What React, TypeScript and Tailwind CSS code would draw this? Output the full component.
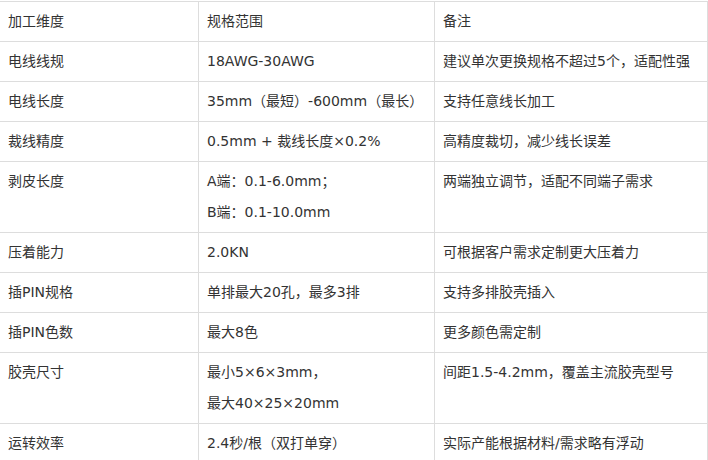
const rows: [string, string[], string][] = [
  ["加工维度", ["规格范围"], "备注"],
  ["电线线规", ["18AWG-30AWG"], "建议单次更换规格不超过5个，适配性强"],
  ["电线长度", ["35mm（最短）-600mm（最长）"], "支持任意线长加工"],
  ["裁线精度", ["0.5mm + 裁线长度×0.2%"], "高精度裁切，减少线长误差"],
  ["剥皮长度", ["A端：0.1-6.0mm；", "B端：0.1-10.0mm"], "两端独立调节，适配不同端子需求"],
  ["压着能力", ["2.0KN"], "可根据客户需求定制更大压着力"],
  ["插PIN规格", ["单排最大20孔，最多3排"], "支持多排胶壳插入"],
  ["插PIN色数", ["最大8色"], "更多颜色需定制"],
  ["胶壳尺寸", ["最小5×6×3mm，", "最大40×25×20mm"], "间距1.5-4.2mm，覆盖主流胶壳型号"],
  ["运转效率", ["2.4秒/根（双打单穿）"], "实际产能根据材料/需求略有浮动"],
];

export default function App() {
  return (
    <div className="h-[460px] w-[708px] overflow-hidden bg-white">
      <div
        className="ml-[-1px] mt-px grid w-[709px] grid-cols-[199px_236px_273px] border-l border-t border-[#dddddd] text-[14px] leading-[31px] text-[#333333]"
        style={{ fontFamily: '"DejaVu Sans", "Noto Sans CJK SC", sans-serif' }}
      >
        {rows.map(([a, b, c], i) => (
          <div key={i} className="contents">
            <div className="border-b border-r border-[#dddddd] px-2 py-1">{a}</div>
            <div className="border-b border-r border-[#dddddd] px-2 py-1">
              {b.map((line, j) => (
                <p key={j}>{line}</p>
              ))}
            </div>
            <div className="border-b border-r border-[#dddddd] px-2 py-1">{c}</div>
          </div>
        ))}
      </div>
    </div>
  );
}
